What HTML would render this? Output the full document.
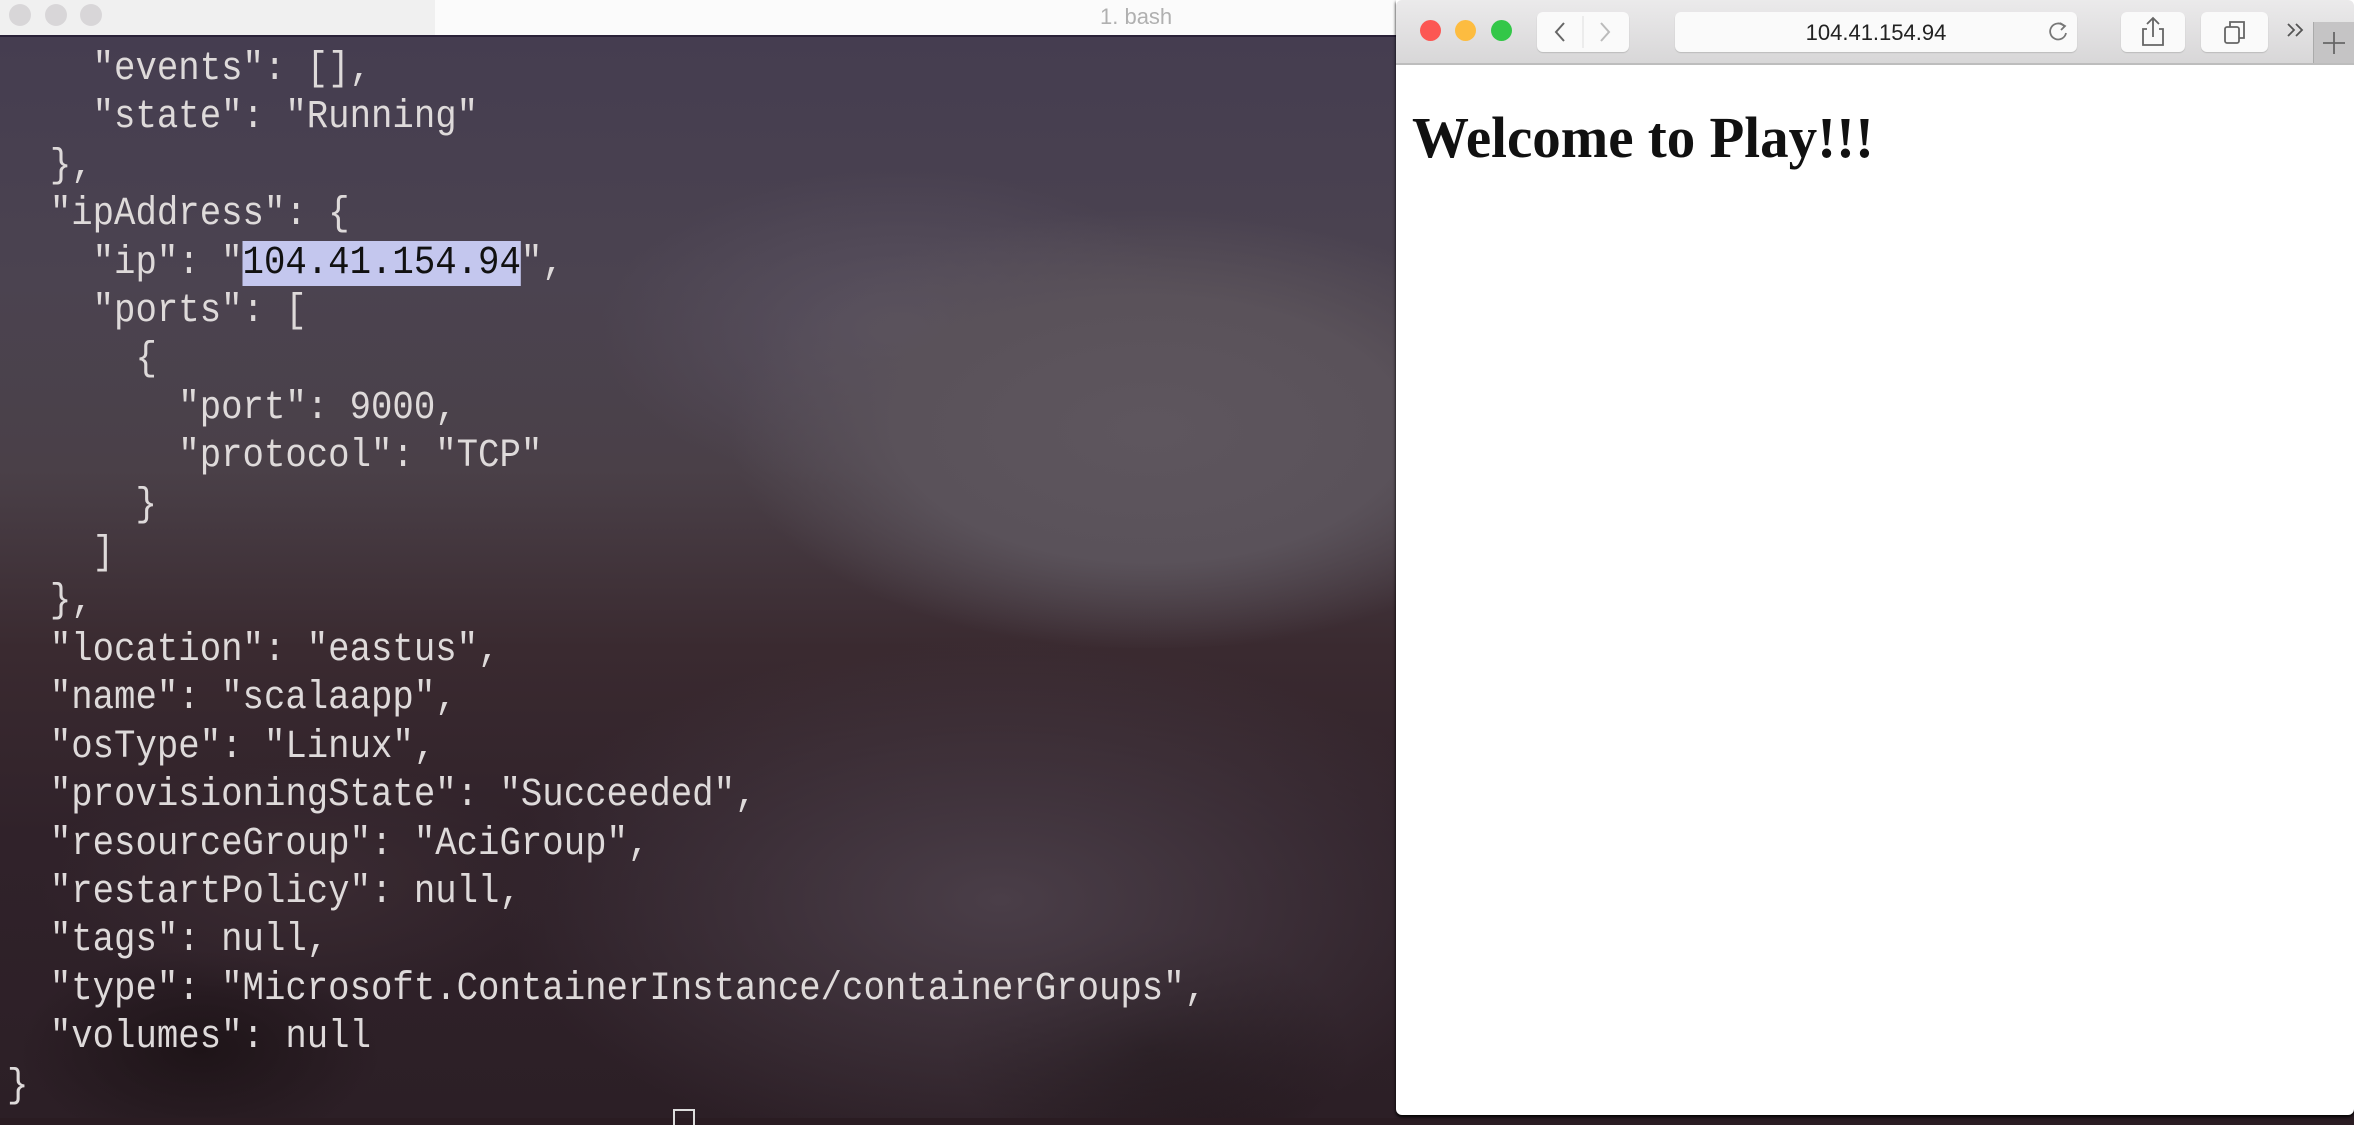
<!DOCTYPE html>
<html><head><meta charset="utf-8"><style>
html,body{margin:0;padding:0;width:2354px;height:1118px;overflow:hidden;background:#2a1c22;}
.term{position:absolute;left:0;top:0;width:2354px;height:1118px;
background:
radial-gradient(ellipse 420px 220px at 1150px 430px,#5e565e 0%,#5a525a 60%,rgba(90,82,90,0) 100%),
radial-gradient(ellipse 300px 160px at 900px 330px,#5a5260 0%,rgba(90,82,96,0) 100%),
radial-gradient(ellipse 500px 260px at 1000px 900px,#4a3e48 0%,rgba(74,62,72,0) 100%),
radial-gradient(ellipse 260px 120px at 300px 880px,#3a2b32 0%,rgba(58,43,50,0) 100%),
radial-gradient(ellipse 200px 120px at 1150px 1050px,#1c1216 0%,rgba(28,18,22,0) 100%),
radial-gradient(ellipse 180px 100px at 200px 1050px,#1e1418 0%,rgba(30,20,24,0) 100%),
linear-gradient(180deg,#443c50 0%,#4b4350 25%,#4a4048 42%,#3a2a30 58%,#30222a 75%,#2c1f26 100%);}
.tbar{position:absolute;left:0;top:0;width:1400px;height:35px;background:#fbfbfb;border-bottom:2px solid #2a2238;}
.tbar .lp{position:absolute;left:0;top:0;width:435px;height:35px;background:#f0f0f0;}
.dot{position:absolute;width:22px;height:22px;border-radius:50%;top:4px;}
.tt{position:absolute;left:1100px;top:4px;font:22px "Liberation Sans",sans-serif;color:#b0b0b0;}
.code{position:absolute;left:7px;top:46px;font-family:"Liberation Mono",monospace;font-size:40px;line-height:48.4px;color:#dedada;white-space:pre;transform-origin:0 0;transform:scaleX(0.892);}
.hl{background:#c4c7ee;color:#111;}
.cur{position:absolute;left:673px;top:1109px;width:18px;height:14px;border:2px solid #ddd;border-bottom:none;}
.br{position:absolute;left:1396px;top:0;width:958px;height:1115px;background:#fff;border-radius:0 0 6px 6px;box-shadow:0 2px 3px #000;}
.tool{position:absolute;left:0;top:0;width:958px;height:63px;background:linear-gradient(#ebeaeb,#d8d7d8);border-bottom:2px solid #bdbdbd;border-radius:6px 6px 0 0;}
.btn{position:absolute;top:12px;height:40px;background:#fafafa;border-radius:6px;box-shadow:0 1px 1px #bbb;}
.url{font:22px "Liberation Sans",sans-serif;color:#222;position:absolute;left:0;width:100%;text-align:center;top:8px;}
</style></head><body>
<div class="term">
<div class="tbar"><div class="lp"></div>
<div class="dot" style="left:9px;background:#d8d6d8"></div>
<div class="dot" style="left:45px;background:#d8d6d8"></div>
<div class="dot" style="left:80px;background:#d8d6d8"></div>
<div class="tt">1. bash</div></div>
<div class="code">    "events": [],
    "state": "Running"
  },
  "ipAddress": {
    "ip": "<span class="hl">104.41.154.94</span>",
    "ports": [
      {
        "port": 9000,
        "protocol": "TCP"
      }
    ]
  },
  "location": "eastus",
  "name": "scalaapp",
  "osType": "Linux",
  "provisioningState": "Succeeded",
  "resourceGroup": "AciGroup",
  "restartPolicy": null,
  "tags": null,
  "type": "Microsoft.ContainerInstance/containerGroups",
  "volumes": null
}</div>
<div class="cur"></div>
</div>
<div class="br">
<div class="tool">
<div class="dot" style="left:24px;top:20px;width:21px;height:21px;background:#fc5753"></div>
<div class="dot" style="left:59px;top:20px;width:21px;height:21px;background:#fdbc40"></div>
<div class="dot" style="left:95px;top:20px;width:21px;height:21px;background:#33c748"></div>
<div class="btn" style="left:141px;width:92px;"><svg width="92" height="40"><line x1="46" y1="4" x2="46" y2="36" stroke="#ddd"/><path d="M27 11 L19 20 L27 29" stroke="#666" stroke-width="2" fill="none"/><path d="M64 11 L72 20 L64 29" stroke="#bbb" stroke-width="2" fill="none"/></svg></div>
<div class="btn" style="left:279px;width:402px;"><div class="url">104.41.154.94</div><svg style="position:absolute;left:372px;top:8px" width="24" height="24"><path d="M17 6 A8 8 0 1 0 19 13" stroke="#777" stroke-width="1.8" fill="none"/><path d="M13 3 L18 6 L14 10" stroke="#777" stroke-width="1.8" fill="none"/></svg></div>
<div class="btn" style="left:725px;width:64px;"><svg width="64" height="40"><path d="M26 17 H22 V33 H42 V17 H38" stroke="#666" stroke-width="1.8" fill="none"/><path d="M32 25 V6 M26 12 L32 6 L38 12" stroke="#666" stroke-width="1.8" fill="none"/></svg></div>
<div class="btn" style="left:805px;width:67px;"><svg width="67" height="40"><rect x="24" y="15" width="14" height="16" rx="2" stroke="#666" stroke-width="1.8" fill="none"/><path d="M29 15 V10 H43 V26 H38" stroke="#666" stroke-width="1.8" fill="none"/></svg></div>
<svg style="position:absolute;left:888px;top:18px" width="24" height="24"><path d="M4 6 L10 12 L4 18 M12 6 L18 12 L12 18" stroke="#555" stroke-width="1.8" fill="none"/></svg>
<div style="position:absolute;left:917px;top:22px;width:41px;height:41px;background:#c5c4c5;border-left:1px solid #aaa;"><svg width="41" height="41"><path d="M20 10 V32 M9 21 H31" stroke="#666" stroke-width="1.8"/></svg></div>
</div>
<svg style="position:absolute;left:0;top:92px" width="958" height="90"><text x="16" y="65" textLength="462" lengthAdjust="spacingAndGlyphs" font-family="Liberation Serif, serif" font-weight="bold" font-size="58" fill="#111">Welcome to Play!!!</text></svg>
</div>
</body></html>
